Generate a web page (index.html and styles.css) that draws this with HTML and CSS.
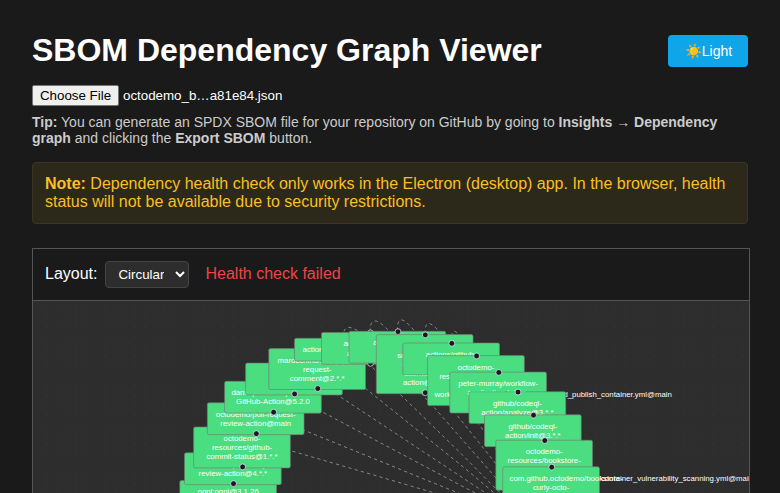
FILE: index.html
```html
<!DOCTYPE html>
<html lang="en">
<head>
<meta charset="utf-8">
<title>SBOM Dependency Graph Viewer</title>
<link rel="stylesheet" href="styles.css">
</head>
<body>
<main class="app">
  <header class="header">
    <h1>SBOM Dependency Graph Viewer</h1>
    <button class="theme-button" type="button">☀️Light</button>
  </header>
  <div class="file-row"><button class="file-button" type="button">Choose File</button><span>octodemo_b…a81e84.json</span></div>
  <p class="tip"><strong>Tip:</strong> You can generate an SPDX SBOM file for your repository on GitHub by going to <strong>Insights → Dependency graph</strong> and clicking the <strong>Export SBOM</strong> button.</p>
  <div class="note"><strong>Note:</strong> Dependency health check only works in the Electron (desktop) app. In the browser, health status will not be available due to security restrictions.</div>
  <section class="viewer">
    <div class="toolbar">
      <label for="layout">Layout:</label>
      <select id="layout" class="layout-select"><option>Circular</option></select>
      <span class="status">Health check failed</span>
    </div>
    <div class="canvas">
      <svg class="edges" viewBox="33 301 716 192">
        <defs><pattern id="dots" x="36" y="306" width="9.8" height="9.8" patternUnits="userSpaceOnUse"><circle class="dot" cx="1" cy="1" r=".35"/></pattern></defs>
        <rect x="33" y="301" width="716" height="192" fill="url(#dots)"/>
        <g class="links">
          <path d="M280 447.5L433 492.5L517 516"/>
          <path d="M290 424.5L457 492.5L517 516"/>
          <path d="M312 406.5L460 485L517 515"/>
          <path d="M330 390L460 476L517 514"/>
          <path d="M360 384L460 464.3L517 512"/>
          <path d="M368 363L460 452.5L517 510"/>
          <path d="M390 360L434 407.3L517 502"/>
          <path d="M420 371L456 414L517 490"/>
          <path d="M470 411L517 480"/>
          <path d="M343 338C343 325 350 325 361 333"/>
          <path d="M370 332C370 316 378 319 389 331"/>
          <path d="M397.500 331C397 313 405 319 417 334"/>
          <path d="M425 334C425 318 431 323 439 331L442 336"/>
          <path d="M451.500 343C451 328 455 330 459 335"/>
        </g>
      </svg>
      <div class="node" style="--x:146.500;--y:179.200">ognl:ognl@3.1.26</div>
      <div class="node" style="--x:151.200;--y:151.500">actions/dependency-<br>review-action@4.*.*</div>
      <div class="node" style="--x:160.300;--y:125.700">octodemo-<br>resources/github-<br>commit-status@1.*.*</div>
      <div class="node" style="--x:174;--y:101.500">octodemo/pull-request-<br>review-action@main</div>
      <div class="node" style="--x:191.300;--y:80">danielpalme/ReportGenerator-<br>GitHub-Action@5.2.0</div>
      <div class="node" style="--x:212.300;--y:61.800">actions/<br>cache@4.*.*</div>
      <div class="node" style="--x:235.500;--y:47.300">marocchino/sticky-pull-<br>request-<br>comment@2.*.*</div>
      <div class="node" style="--x:261.200;--y:37">actions/checkout@4.*.*</div>
      <div class="node" style="--x:288.200;--y:31.200">actions/upload-<br>artifact@4.*.*</div>
      <div class="node" style="--x:315.700;--y:30">actions/setup-<br>java@4.*.*</div>
      <div class="node" style="--x:343;--y:33.300">advanced-<br>security/maven-<br>dependency-<br>submission-<br>action@4.*.*</div>
      <div class="node" style="--x:369.500;--y:41.700">actions/github-<br>script@7.*.*</div>
      <div class="node" style="--x:394.300;--y:54.300">octodemo-<br>resources/bookstore-<br>reusable-<br>workflows/.github/workflows/java_build_publish_container.yml@main</div>
      <div class="node" style="--x:416.500;--y:70.800">peter-murray/workflow-<br>application-token-<br>action@4.*.*</div>
      <div class="node" style="--x:435.700;--y:90.400">github/codeql-<br>action/analyze@3.*.*</div>
      <div class="node" style="--x:451.200;--y:113.500">github/codeql-<br>action/init@3.*.*</div>
      <div class="node" style="--x:462.500;--y:138.900">octodemo-<br>resources/bookstore-<br>reusable-<br>workflows/.github/workflows/container_vulnerability_scanning.yml@main</div>
      <div class="node" style="--x:469.400;--y:165.500">com.github.octodemo/bookstore-<br>curly-octo-<br>train@1.0.0</div>
    </div>
  </section>
</main>
</body>
</html>
```
FILE: styles.css
```css
* { box-sizing: border-box; }
html { background: #1a1a1a; }
body { margin: 0; height: 493px; overflow: hidden; color: #fff; font: 16px "Liberation Sans", Arial, sans-serif; }
.app { display: flex; flex-direction: column; height: 493px; padding: 32px 32px 0; }
.header { display: flex; flex: none; align-items: center; justify-content: space-between; height: 37px; }
h1 { margin: 0; font-size: 32px; line-height: 37px; }
.theme-button { width: 80px; height: 32px; margin-top: 1px; padding: 0 0 0 1px; border: 0; border-radius: 4px; background: #0ea5e9; color: #fff; font: 14px "Liberation Sans", Arial, sans-serif; }
.file-row { display: flex; flex: none; align-items: center; gap: 4px; height: 21px; margin-top: 16px; font-size: 13.333px; }
.file-button { width: 87px; height: 21px; padding: 1px 6px; border: 1px solid #767676; border-radius: 2px; background: #efefef; color: #000; font: 13.333px "Liberation Sans", Arial, sans-serif; }
.tip { flex: none; height: 32px; margin: 8px 0 0; color: #ccc; font-size: 14px; line-height: 16px; }
.note { flex: none; height: 62px; margin-top: 16px; padding: 12px; border: 1px solid #3d3424; border-radius: 4px; background: #2d291a; color: #fbbf24; line-height: 18px; }
.viewer { display: flex; flex: 1; flex-direction: column; width: 718px; margin-top: 24px; border: 1px solid #555; border-bottom: 0; }
.toolbar { display: flex; flex: none; align-items: center; height: 52px; padding: 0 12px; border-bottom: 1px solid #555; }
.toolbar label, .status { padding-bottom: 2px; }
.layout-select { width: 84px; height: 27px; margin: 0 16px 0 8px; padding: 4px 8px; border: 1px solid #444; border-radius: 4px; background: #2d2d2d; color: #fff; font: 13.333px "Liberation Sans", Arial, sans-serif; }
.status { color: #ef4444; }
.canvas { position: relative; flex: 1; overflow: hidden; background: #2d2d2d; }
.edges { display: block; width: 716px; height: 192px; }
.dot { fill: #555; }
.links { fill: none; stroke: #aaa; stroke-width: .7; stroke-dasharray: 3.24; }
.node { position: absolute; top: 0; left: 0; width: 150px; padding: 10px; border: 1px solid #777; border-radius: 3px; background: #4ade80; color: #fff; font-size: 12px; line-height: 14px; text-align: center; white-space: nowrap; transform: translate(calc(var(--x) * 1px), calc(var(--y) * 1px)) scale(.649); transform-origin: 0 0; }
.node::before, .node::after { content: ""; position: absolute; left: 69.5px; width: 8px; height: 8px; border: 1px solid #fff; border-radius: 50%; background: #1a192b; }
.node::before { top: -5px; }
.node::after { bottom: -4px; }
```
